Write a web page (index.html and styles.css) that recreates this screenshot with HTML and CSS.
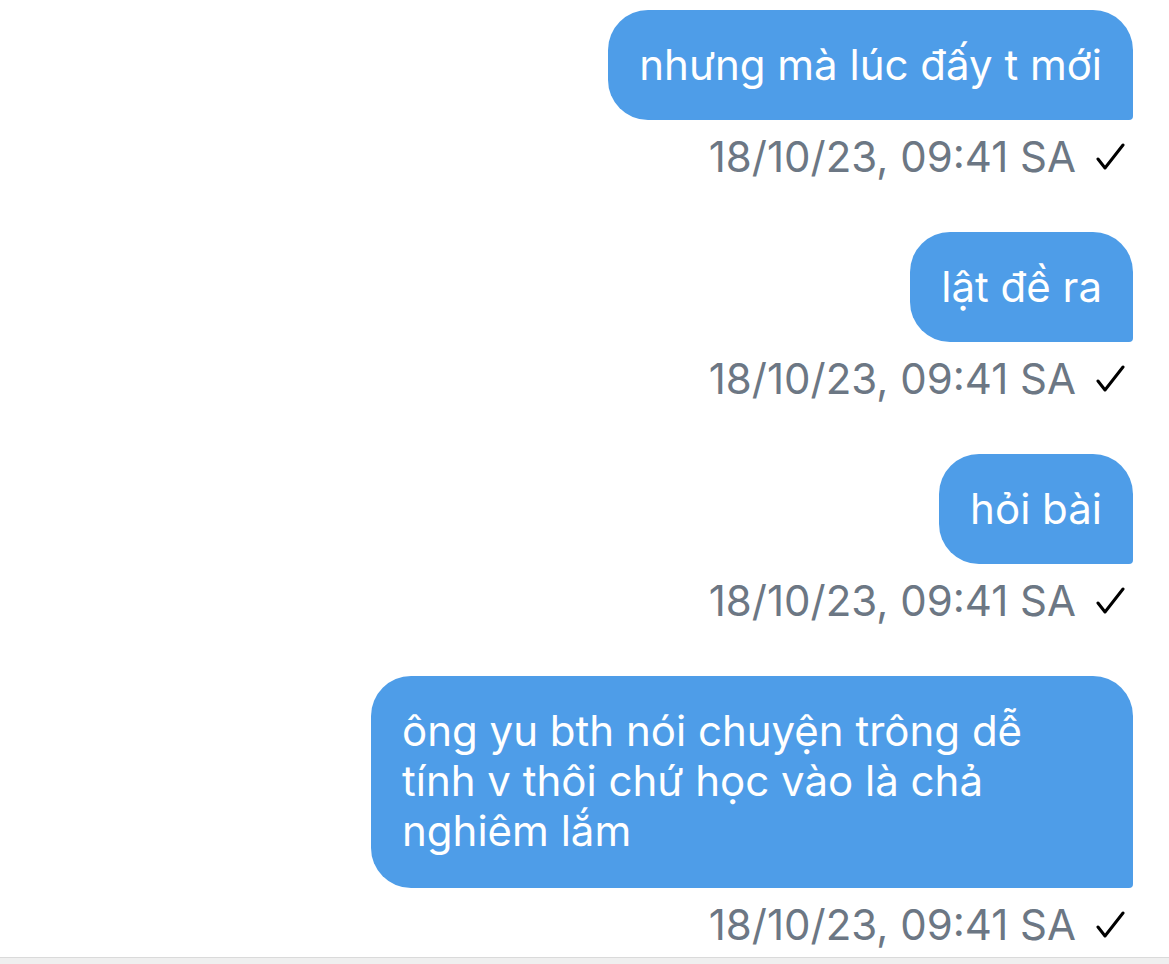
FILE: index.html
```html
<!DOCTYPE html>
<html lang="vi">
<head>
    <meta charset="UTF-8">
    <meta name="viewport" content="width=device-width, initial-scale=1.0">
    <title>Tin nhắn</title>
    <link rel="stylesheet" href="styles.css">
</head>
<body>
    <div class="chat">
        <div class="message">
            <div class="bubble">nhưng mà lúc đấy t mới</div>
            <div class="meta">
                <span class="time">18/10/23, 09:41 SA</span>
                <svg class="check" width="30" height="28" viewBox="0 0 30 28"><polyline points="2,16 9,25 27,2" /></svg>
            </div>
        </div>
        <div class="message">
            <div class="bubble">lật đề ra</div>
            <div class="meta">
                <span class="time">18/10/23, 09:41 SA</span>
                <svg class="check" width="30" height="28" viewBox="0 0 30 28"><polyline points="2,16 9,25 27,2" /></svg>
            </div>
        </div>
        <div class="message">
            <div class="bubble">hỏi bài</div>
            <div class="meta">
                <span class="time">18/10/23, 09:41 SA</span>
                <svg class="check" width="30" height="28" viewBox="0 0 30 28"><polyline points="2,16 9,25 27,2" /></svg>
            </div>
        </div>
        <div class="message">
            <div class="bubble multi">ông yu bth nói chuyện trông dễ tính v thôi chứ học vào là chả nghiêm lắm</div>
            <div class="meta">
                <span class="time">18/10/23, 09:41 SA</span>
                <svg class="check" width="30" height="28" viewBox="0 0 30 28"><polyline points="2,16 9,25 27,2" /></svg>
            </div>
        </div>
    </div>
    <div class="composer"></div>
</body>
</html>
```

FILE: styles.css
```css
body {
    margin: 0;
    background: #ffffff;
    font-family: Inter, "Liberation Sans", Arial, sans-serif;
    overflow: hidden;
}
.chat {
    display: flex;
    flex-direction: column;
    align-items: flex-end;
    padding: 10px 36px 0 0;
}
.message {
    display: flex;
    flex-direction: column;
    align-items: flex-end;
    margin-bottom: 50px;
}
.message:last-child {
    margin-bottom: 7px;
}
.bubble {
    background: #4e9de8;
    color: #ffffff;
    font-size: 42px;
    line-height: 50px;
    padding: 30px 31px;
    border-radius: 40px 40px 4px 40px;
    max-width: 700px;
}
.bubble.multi {
    padding-bottom: 32px;
}
.meta {
    display: flex;
    align-items: center;
    gap: 20px;
    margin-top: 12px;
    padding-right: 7px;
    height: 50px;
}
.time {
    color: #6c7784;
    font-size: 42px;
    line-height: 50px;
}
.check polyline {
    fill: none;
    stroke: #000000;
    stroke-width: 3;
    stroke-linecap: round;
    stroke-linejoin: round;
}
.composer {
    height: 40px;
    background: #efefef;
    border-top: 1px solid #dadada;
}
```
